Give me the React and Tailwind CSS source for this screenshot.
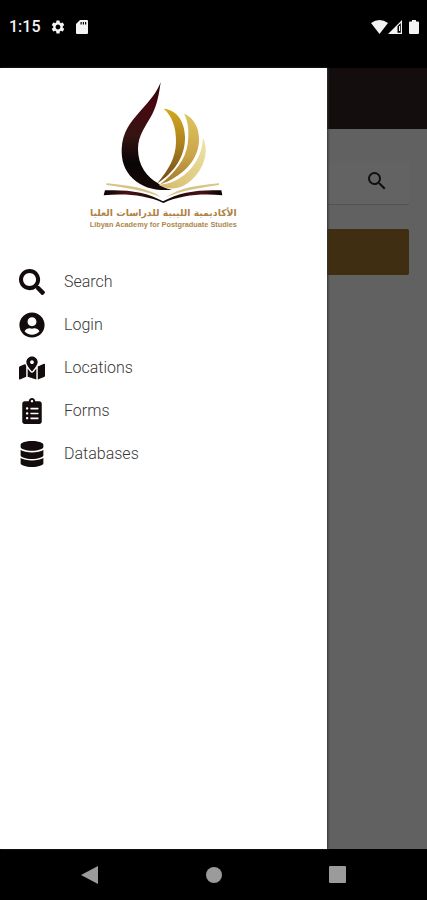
import { FaSearch, FaUserCircle, FaMapMarkedAlt, FaClipboardList, FaDatabase } from "react-icons/fa";
import { MdSearch, MdSettings } from "react-icons/md";

const menu = [
  { label: "Search", Icon: FaSearch },
  { label: "Login", Icon: FaUserCircle },
  { label: "Locations", Icon: FaMapMarkedAlt },
  { label: "Forms", Icon: FaClipboardList },
  { label: "Databases", Icon: FaDatabase },
];

function StatusBar() {
  return (
    <div className="flex h-[68px] shrink-0 items-start justify-between bg-black pt-[18px] pr-2 pl-[9px] text-[#f4f4f4]">
      <div className="flex h-[18px] items-center">
        <span className="w-[41px] text-base leading-5 font-medium">1:15</span>
        <MdSettings className="size-4" />
        <svg viewBox="0 0 12 14" className="ml-[10px] h-[14px] w-3" fill="currentColor" aria-hidden="true">
          <path fillRule="evenodd" d="M4 0h7q1 0 1 1v12q0 1-1 1H1q-1 0-1-1V4zM4.5 2v2.5h1.2V2zM6.8 2v2.5H8V2zM9 2v2.5h1.2V2z" />
        </svg>
      </div>
      <div className="flex h-[18px] items-center">
        <svg viewBox="0 0 17 14" className="h-[14px] w-[17px]" fill="currentColor" aria-hidden="true">
          <path d="M0 3Q8.500-3 17 3L8.500 14z" />
        </svg>
        <svg viewBox="0 0 14 14" className="h-[14px] w-[14px]" fill="currentColor" aria-hidden="true">
          <path fillRule="evenodd" d="M14 0v14H0zM12.800 3L9.500 6.300V12.700h3.300z" />
          <path d="M11 6h1v5h-1z" />
        </svg>
        <svg viewBox="0 0 10 14" className="ml-[7px] h-[14px] w-[10px]" fill="currentColor" aria-hidden="true">
          <path d="M3 0h4v1.500h2q1 0 1 1V13q0 1-1 1H1q-1 0-1-1V2.500q0-1 1-1h2z" />
        </svg>
      </div>
    </div>
  );
}

function Logo() {
  return (
    <svg viewBox="0 0 510 510" className="size-[170px]" role="img" aria-label="Libyan Academy for Postgraduate Studies">
      <defs>
        <linearGradient id="flame" x1="0" y1="0" x2="0" y2="1">
          <stop offset="0" stopColor="#260207" />
          <stop offset="0.2" stopColor="#480810" />
          <stop offset="0.5" stopColor="#351412" />
          <stop offset="0.75" stopColor="#090506" />
          <stop offset="1" stopColor="#160a07" />
        </linearGradient>
        <linearGradient id="gold" x1="0" y1="0" x2="0" y2="1">
          <stop offset="0" stopColor="#d3a91d" />
          <stop offset="0.5" stopColor="#aa801f" />
          <stop offset="1" stopColor="#6d4815" />
        </linearGradient>
        <linearGradient id="sand" x1="0" y1="0" x2="0" y2="1">
          <stop offset="0" stopColor="#dfc45f" />
          <stop offset="0.6" stopColor="#c9a449" />
          <stop offset="1" stopColor="#a27a2b" />
        </linearGradient>
        <linearGradient id="pale" x1="1" y1="0" x2="0" y2="1">
          <stop offset="0" stopColor="#eee3a9" />
          <stop offset="1" stopColor="#d4bb68" />
        </linearGradient>
        <linearGradient id="cover">
          <stop offset="0" stopColor="#070304" />
          <stop offset="0.2" stopColor="#4b1217" />
          <stop offset="0.5" stopColor="#090506" />
          <stop offset="0.82" stopColor="#4b1217" />
          <stop offset="1" stopColor="#070304" />
        </linearGradient>
      </defs>
      <path fill="url(#flame)" d="M242 37C237 72 232 103 217 132C199 167 174 194 174 237C174 288 202 321 234 340C244 349 257 357 276 359C231 364 189 354 159 326C132 301 124 270 125 237C127 187 151 157 183 121C211 90 230 68 242 37Z" />
      <path fill="url(#gold)" d="M251 116C291 119 314 155 315 201C316 259 283 307 232 340C267 297 287 263 288 216C289 173 276 137 251 116Z" />
      <path fill="url(#sand)" d="M312 131C342 143 358 174 357 211C356 271 306 322 239 344C287 307 317 267 323 222C328 187 325 155 312 131Z" />
      <path fill="url(#pale)" d="M369 203C386 238 376 284 347 317C315 354 276 366 236 345C288 342 330 309 352 268C363 247 368 225 369 203Z" />
      <path fill="#d8c486" d="M79 340C145 346 201 352 244 382C195 362 141 354 79 345ZM417 340C353 346 300 353 258 382C304 362 357 354 417 345Z" />
      <path fill="url(#cover)" d="M75 361C142 358 202 366 249 394C298 366 357 358 424 361L427 376C361 370 303 376 250 399C199 376 138 370 71 376Z" />
      <text x="250" y="439" direction="rtl" textAnchor="middle" fill="#b08243" className="font-['DejaVu_Sans',sans-serif] text-[28px] font-bold">الأكاديمية الليبية للدراسات العليا</text>
      <text x="250" y="472" textAnchor="middle" fill="#ad884e" className="font-['Liberation_Sans',sans-serif] text-[22px] font-bold">Libyan Academy for Postgraduate Studies</text>
    </svg>
  );
}

function Drawer() {
  return (
    <aside className="absolute inset-y-0 left-0 w-[327px] bg-white shadow-[1px_0_2px_#333333]">
      <div className="flex justify-center pt-[2px] pl-[2px]">
        <Logo />
      </div>
      <nav className="mt-5 flex flex-col">
        {menu.map(({ label, Icon }) => (
          <a key={label} href="#" className="flex h-[43px] items-center gap-[19px] pl-[19px] text-base text-[#383838]">
            <Icon className="size-[26px] text-[#130b0c]" />
            <span className="font-light">{label}</span>
          </a>
        ))}
      </nav>
    </aside>
  );
}

export default function App() {
  return (
    <div className="flex min-h-screen flex-col bg-black font-['Roboto',sans-serif]">
      <StatusBar />
      <div className="relative flex-1 bg-[#616161]">
        <header className="h-[61px] bg-[#140d0d]" />
        <main className="flex flex-col gap-6 px-[18px] pt-8">
          <div className="flex h-11 items-center border-b border-[#515151] bg-[#636363] pr-5 pb-[3px]">
            <input type="text" aria-label="Search catalogue" className="min-w-0 flex-1 outline-none" />
            <button type="button" aria-label="Run search" className="text-[#101010]">
              <MdSearch className="size-6" />
            </button>
          </div>
          <button type="button" aria-label="Submit" className="h-[46px] rounded-[2px] bg-[#3f2e12]" />
        </main>
        <Drawer />
      </div>
      <div className="flex h-[51px] shrink-0 items-center justify-around px-[28px] text-[#9b9b9b]">
        <button type="button" aria-label="Back">
          <svg viewBox="0 0 18 18" className="size-[18px]" fill="currentColor"><path d="M17 0v18L0 9z" /></svg>
        </button>
        <button type="button" aria-label="Home" className="size-4 rounded-full bg-[#9b9b9b]" />
        <button type="button" aria-label="Recent apps" className="size-[17px] rounded-[1px] bg-[#9b9b9b]" />
      </div>
    </div>
  );
}
